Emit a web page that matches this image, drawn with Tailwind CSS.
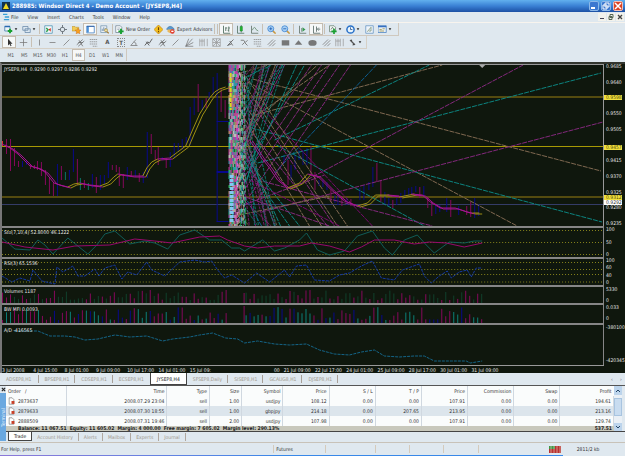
<!DOCTYPE html>
<html lang="en">
<head>
<meta charset="utf-8">
<title>288985: Windsor Direct 4 - Demo Account - [JYSEP8,H4]</title>
<script src="https://cdn.jsdelivr.net/npm/@tailwindcss/browser@4"></script>
</head>
<body class="flex min-h-screen flex-col overflow-x-hidden bg-[#dfe8ef] font-['DejaVu_Sans_Condensed','Open_Sans',sans-serif] text-[5px] leading-[8px] text-[#333]">

<svg class="hidden" aria-hidden="true">
  <defs>
    <symbol id="i-new" viewBox="0 0 12 12"><path d="M1 2h7v6H1z" fill="#eef4f8" stroke="#3c78a8"/><path d="M1 2h7" stroke="#2868b0" stroke-width="2"/><path d="M8 5v6M5 8h6" stroke="#18a030" stroke-width="2.5"/></symbol>
    <symbol id="i-prof" viewBox="0 0 12 12"><path d="M1 2h7v5H1zM4 5h7v5H4z" fill="#dce8f2" stroke="#6888a8"/></symbol>
    <symbol id="i-watch" viewBox="0 0 12 12"><path d="M1 1h10v10H1z" fill="#f4f8fa" stroke="#4890b0"/><path d="M3 4l3 3M3 9l2-2" stroke="#30a050" stroke-width="2"/><path d="M6 6l3-2v5z" fill="#d83020"/></symbol>
    <symbol id="i-data" viewBox="0 0 12 12"><circle cx="6" cy="6" r="3" fill="none" stroke="#707880" stroke-width="1.3"/><path d="M6 0v4M6 8v4M0 6h4M8 6h4" stroke="#707880" stroke-width="1.3"/></symbol>
    <symbol id="i-star" viewBox="0 0 12 12"><path d="M0 2h4l1 1h4v5H0z" fill="#f0cc58" stroke="#b88c28" stroke-width=".7"/><path d="M8 4l1.2 2.5 2.8.3-2 2 .5 3L8 10.500l-2.500 1.300.5-3-2-2 2.800-.3z" fill="#f8a020" stroke="#c06010" stroke-width=".5"/></symbol>
    <symbol id="i-term" viewBox="0 0 12 12"><path d="M1 1.500h10v9H1z" fill="#fff" stroke="#3878c0"/><path d="M2.500 2v8" stroke="#4a90d8" stroke-width="2.500"/><path d="M1 2h10" stroke="#2858a0"/></symbol>
    <symbol id="i-test" viewBox="0 0 12 12"><path d="M1 1h8v9H1z" fill="#e8eef4" stroke="#7898b0"/><path d="M3 8V5M5 8V3M7 8V4" stroke="#6080a0"/><circle cx="8" cy="7" r="2" fill="#f0e0a0" stroke="#a89050"/><path d="M9.500 9l2 2" stroke="#a07830" stroke-width="1.500"/></symbol>
    <symbol id="i-order" viewBox="0 0 12 12"><path d="M1 1h6l2 2v7H1z" fill="#fff" stroke="#708090"/><path d="M3 4h4M3 6h3" stroke="#90a0b0"/><path d="M8 5v7M4.500 8.500h7" stroke="#18a030" stroke-width="2.500"/></symbol>
    <symbol id="i-meta" viewBox="0 0 12 12"><path d="M6 0l6 6-6 6-6-6z" fill="#f4c020" stroke="#c88810"/><path d="M6 3v4M6 8v1.500" stroke="#704000" stroke-width="1.500"/></symbol>
    <symbol id="i-expert" viewBox="0 0 12 12"><path d="M1 5q4-6 9-1l1 2H1z" fill="#5898d0" stroke="#306898" stroke-width=".6"/><path d="M2 6h7v3q-4 3-7 0z" fill="#e8b860"/><circle cx="8.500" cy="8.500" r="3" fill="#e03020"/><path d="M7 7.500h3v2H7z" fill="#fff"/></symbol>
    <symbol id="i-bars" viewBox="0 0 12 12"><path d="M2 1v10h9M5 3v5M5 4h2M9 2v7M7.500 7H9M9 4h1.500" fill="none" stroke="#486858" stroke-width="1.100"/></symbol>
    <symbol id="i-candle" viewBox="0 0 12 12"><path d="M2 1v10h9M7 0v10" fill="none" stroke="#486858"/><path d="M5.500 2h3v6h-3z" fill="#20b830" stroke="#107820" stroke-width=".6"/></symbol>
    <symbol id="i-line" viewBox="0 0 12 12"><path d="M2 1v10h9" fill="none" stroke="#58685c"/><path d="M3 7q3-7 5-1l3 2" fill="none" stroke="#608868"/></symbol>
    <symbol id="i-zin" viewBox="0 0 12 12"><path d="M7.500 7.500l4 4" stroke="#c89840" stroke-width="2"/><circle cx="5" cy="5" r="4" fill="#a8d0f4" stroke="#3880d0"/><path d="M5 3v4M3 5h4" stroke="#1858b0"/></symbol>
    <symbol id="i-zout" viewBox="0 0 12 12"><path d="M7.500 7.500l4 4" stroke="#c89840" stroke-width="2"/><circle cx="5" cy="5" r="4" fill="#a8d0f4" stroke="#3880d0"/><path d="M3 5h4" stroke="#1858b0"/></symbol>
    <symbol id="i-scroll" viewBox="0 0 12 12"><path d="M2 1v10h9M5 4v5" fill="none" stroke="#58685c"/><path d="M6 3l4 3-4 3z" fill="#389850"/></symbol>
    <symbol id="i-shift" viewBox="0 0 12 12"><path d="M2 1v10h9M6 2v7" fill="none" stroke="#485c58"/><path d="M11 5.500H8M9 3.500l-2 2 2 2" fill="none" stroke="#485c58"/></symbol>
    <symbol id="i-ind" viewBox="0 0 12 12"><path d="M2 1h6l2 2v6H2z" fill="#f4f6f4" stroke="#688070"/><path d="M4 6l2-3 2 3" fill="none" stroke="#507060"/><path d="M8 5v7M4.500 8.500h7" stroke="#18a030" stroke-width="2.200"/></symbol>
    <symbol id="i-clock" viewBox="0 0 12 12"><circle cx="6" cy="6" r="4.800" fill="#e8f4fc" stroke="#2870c8" stroke-width="2"/><path d="M6 3v3h2.500" fill="none" stroke="#204880"/></symbol>
    <symbol id="i-tpl" viewBox="0 0 12 12"><path d="M1 1h10v10H1z" fill="#eef4fa" stroke="#6090c0"/><path d="M3 9l5-6v5H5" fill="none" stroke="#789070"/></symbol>
    <symbol id="i-tile" viewBox="0 0 12 12"><path d="M0 1h11v9H0z" fill="#e4eef6" stroke="#4880c0"/><path d="M0 2h11" stroke="#3870c0" stroke-width="2"/><path d="M2 6h3M6 5h3M2 8h6" stroke="#a09040"/></symbol>
    <symbol id="i-cursor" viewBox="0 0 12 12"><path d="M4 1v9l2-2 1.500 3 1.200-.6L7.300 7.500H10z" fill="#333"/></symbol>
    <symbol id="i-cross" viewBox="0 0 12 12"><path d="M6 1v10M1 6h10" stroke="#777"/></symbol>
    <symbol id="i-v" viewBox="0 0 12 12"><path d="M6 2v8" stroke="#777"/></symbol>
    <symbol id="i-h" viewBox="0 0 12 12"><path d="M2 6h8" stroke="#777"/></symbol>
    <symbol id="i-trend" viewBox="0 0 12 12"><path d="M2 10l8-8" stroke="#777"/></symbol>
    <symbol id="i-chan" viewBox="0 0 12 12"><path d="M1 9l8-7M3 11l8-7M4 3l5 8M3 6h6" stroke="#666"/></symbol>
    <symbol id="i-fibo" viewBox="0 0 12 12"><path d="M1 2h10M1 5h10M1 8h10M5 11h6" stroke="#888" stroke-dasharray="2 .6"/></symbol>
    <symbol id="i-ang" viewBox="0 0 12 12"><path d="M1 10l7-8M1 10h9M5 5q4 1 3 5" fill="none" stroke="#777"/></symbol>
    <symbol id="i-zig" viewBox="0 0 12 12"><path d="M1 10l4-5 2 2 4-6M3 5l4 5" fill="none" stroke="#555" stroke-width="1.200"/></symbol>
    <symbol id="i-fan" viewBox="0 0 12 12"><path d="M1 11L10 1M1 11l10-5M1 11h10M1 11L5 1" stroke="#777"/></symbol>
    <symbol id="i-cyc" viewBox="0 0 12 12"><path d="M1 1v10M4 1v10M7 1v10M11 1v10M1 4h6" stroke="#999"/></symbol>
    <symbol id="i-gann" viewBox="0 0 12 12"><path d="M1 1h10v10H1zM1 6h10M6 1v10M1 1l10 10M11 1L1 11" fill="none" stroke="#999"/></symbol>
    <symbol id="i-fork" viewBox="0 0 12 12"><path d="M2 10l8-8M2 10l5-2M5 4l4 6" stroke="#666" stroke-width="1.200"/></symbol>
    <symbol id="i-wave" viewBox="0 0 12 12"><path d="M1 3h4l2 3 3-3M3 9l3-3 4 4" fill="none" stroke="#777" stroke-width="1.200"/></symbol>
    <symbol id="i-para" viewBox="0 0 12 12"><path d="M1 9l7-7M3 11l8-8M7 11l4-4" stroke="#888" stroke-width="1.200"/></symbol>
    <symbol id="i-rect" viewBox="0 0 12 12"><path d="M1 3h10v7H1z" fill="#777"/></symbol>
    <symbol id="i-tri" viewBox="0 0 12 12"><path d="M6 3l5 6H1z" fill="#777"/></symbol>
    <symbol id="i-ell" viewBox="0 0 12 12"><ellipse cx="6" cy="6.500" rx="5.500" ry="3.800" fill="#777"/></symbol>
    <symbol id="i-arr" viewBox="0 0 12 12"><path d="M2 3l4 2-1-3zM6 10l4-1-3-3z" fill="#444"/><path d="M3 3l6 6" stroke="#555" stroke-width="1.500"/></symbol>
    <symbol id="i-dd" viewBox="0 0 6 6"><path d="M1 2h4L3 5z" fill="#222"/></symbol>
    <symbol id="i-doc" viewBox="0 0 12 12"><path d="M2 .5h5l3 3v8H2z" fill="#fff" stroke="#666"/><path d="M6 6h5v5H6z" fill="#c84028"/></symbol>
  </defs>
</svg>

<header class="flex h-3 items-center gap-[2px] bg-linear-to-b from-[#62b0ee] via-[#3a80d4] to-[#1c50a4] px-[2px]">
  <svg class="h-2 w-2" viewBox="0 0 8 8"><path d="M0 0h8v8H0z" fill="#10304c"/><path d="M4 1l3 6H1z" fill="#f0d820"/></svg>
  <h1 class="grow text-[6px] leading-[10px] font-bold whitespace-nowrap text-white">288985: Windsor Direct 4 - Demo Account - [JYSEP8,H4]</h1>
  <div class="flex gap-[2px]">
    <button aria-label="Minimize" class="flex h-[10px] w-[10px] items-end rounded-[2px] border border-[#8cb8e8] bg-[#3c78d0] p-[1px]"><span class="h-[2px] w-1 bg-white"></span></button>
    <button aria-label="Restore" class="h-[10px] w-[10px] rounded-[2px] border border-[#8cb8e8] bg-[#3c78d0]"><svg viewBox="0 0 8 8"><path d="M3 1h4v4H3zM1 3h4v4H1z" fill="none" stroke="#fff"/></svg></button>
    <button aria-label="Close" class="h-[10px] w-[10px] rounded-[2px] border border-[#f0c0b8] bg-[#dc4424]"><svg viewBox="0 0 8 8"><path d="M1 1l6 6M7 1L1 7" stroke="#fff" stroke-width="1.500"/></svg></button>
  </div>
</header>

<nav class="flex h-[11px] items-center border-b border-[#f8f4ee] pl-[3px]">
  <svg class="mr-[1px] h-2 w-[7px]" viewBox="0 0 8 8"><path d="M0 1h5M2 4h5M1 7h6" stroke="#38a0d8" stroke-width="1.500"/></svg>
  <div class="flex grow gap-[9px]">
    <a href="#">File</a><a href="#">View</a><a href="#">Insert</a><a href="#">Charts</a><a href="#">Tools</a><a href="#">Window</a><a href="#">Help</a>
  </div>
  <div class="flex items-center gap-[1px] pr-[1px]">
    <button aria-label="Minimize chart" class="flex h-2 w-2 items-end bg-[#f2f2ec] p-[2px]"><span class="h-[1px] w-1 bg-[#445]"></span></button>
    <button aria-label="Restore chart" class="h-2 w-2 bg-[#f2f2ec]"><svg viewBox="0 0 8 8"><path d="M3 1.500h3v3H3zM2 3.500h3v3H2z" fill="none" stroke="#565"/></svg></button>
    <button aria-label="Close chart" class="h-2 w-2 bg-[#f2f2ec]"><svg viewBox="0 0 8 8"><path d="M2 2l4 4M6 2L2 6" stroke="#444" stroke-width="1.300"/></svg></button>
  </div>
</nav>

<div class="flex h-[13px] w-[399px] items-center border-r border-b border-[#cfc8be] pl-[2px]" id="bar1"></div>
<div class="flex h-[13px] w-[367px] items-center border-r border-b border-[#d6d0c6] pl-[2px]" id="bar2"></div>
<div class="mb-[1px] grid h-3 w-[127px] grid-cols-9 items-center border-r border-[#cfc8be] pl-1 text-center text-[#555]" id="bar3"></div>

<main class="flex grow flex-col border-t-2 border-l-2 border-t-[#33362f] border-l-[#777] bg-[#0f170d] text-[#e4e4e4]" id="chart">
  <section class="flex grow-[162] basis-0">
    <div class="relative grow border-t border-r border-[#999]">
      <svg id="p-main" class="absolute inset-0 h-full w-full" viewBox="2 65 602 161" preserveAspectRatio="none"></svg>
      <p class="absolute top-0 left-[2px] whitespace-nowrap">JYSEP8,H4&nbsp; 0.9290 0.9297 0.9286 0.9292</p>
    </div>
    <div class="relative w-[21px] overflow-hidden">
      <div class="flex h-full flex-col justify-between pl-[2px] leading-[5px]" id="prices"></div>
      <span class="absolute top-[19%] left-0 w-[18px] bg-[#f0e040] pl-[2px] leading-[5px] text-[#554c00]">0.9598</span>
      <span class="absolute top-[50%] left-0 w-[18px] bg-[#f0e040] pl-[2px] leading-[5px] text-[#554c00]">0.9457</span>
      <span class="absolute top-[81%] left-0 w-[18px] bg-[#f0e040] pl-[2px] leading-[5px] text-[#554c00]">0.9312</span>
      <span class="absolute top-[84%] left-0 w-[18px] bg-white pl-[2px] leading-[5px] text-[#333]">0.9292</span>
    </div>
  </section>
  <section class="flex grow-[31] basis-0">
    <div class="relative grow border-t-2 border-r border-[#868686]">
      <svg id="p-sto" class="absolute inset-0 h-full w-full" viewBox="2 228 602 29" preserveAspectRatio="none"></svg>
      <p class="absolute top-0 left-[2px]">Sto(7,10,4) 52.8000 46.1222</p>
    </div>
    <div class="flex w-[21px] flex-col justify-between pl-[2px] leading-[6px]"><span>100</span><span>50</span><span>0</span></div>
  </section>
  <section class="flex grow-[28] basis-0">
    <div class="relative grow border-t-2 border-r border-[#868686]">
      <svg id="p-rsi" class="absolute inset-0 h-full w-full" viewBox="2 259 602 26" preserveAspectRatio="none"></svg>
      <p class="absolute top-0 left-[2px]">RSI(3) 65.1536</p>
    </div>
    <div class="flex w-[21px] flex-col justify-between pl-[2px] leading-[6px]"><span>100</span><span>60</span><span>40</span><span>0</span></div>
  </section>
  <section class="flex grow-[18] basis-0">
    <div class="relative grow border-t-2 border-r border-[#868686]">
      <svg id="p-vol" class="absolute inset-0 h-full w-full" viewBox="2 287 602 16" preserveAspectRatio="none"></svg>
      <p class="absolute top-0 left-[2px]">Volumes 1187</p>
    </div>
    <div class="flex w-[21px] flex-col justify-between pt-[2px] pl-[2px] leading-[5px]"><span>5330</span><span>0</span></div>
  </section>
  <section class="flex grow-[20] basis-0">
    <div class="relative grow border-t-2 border-r border-[#868686]">
      <svg id="p-mfi" class="absolute inset-0 h-full w-full" viewBox="2 305 602 18" preserveAspectRatio="none"></svg>
      <p class="absolute top-0 left-[2px]">BW MFI 0.0093</p>
    </div>
    <div class="flex w-[21px] flex-col justify-between py-[2px] pl-[2px] leading-[5px]"><span>0.033</span><span>0</span></div>
  </section>
  <section class="flex grow-[42] basis-0">
    <div class="relative grow border-t-2 border-r border-[#868686]">
      <svg id="p-ad" class="absolute inset-0 h-full w-full" viewBox="2 325 602 40" preserveAspectRatio="none"></svg>
      <p class="absolute top-[1px] left-[2px]">A/D -416565</p>
    </div>
    <div class="flex w-[21px] flex-col justify-between py-[2px] pl-[2px] leading-[5px]"><span>-380100</span><span>-420345</span></div>
  </section>
  <div class="mr-[21px] flex h-2 border-t border-[#999] whitespace-nowrap" id="dates"></div>
</main>

<nav class="flex h-[13px] items-center gap-[1px] border-b border-[#555] text-[#a0988e]" id="tabs">
  <a href="#" class="border-r border-[#a8a098] px-[6px]">ADSEP8,H1</a>
  <a href="#" class="border-r border-[#a8a098] px-[5px]">BPSEP8,H1</a>
  <a href="#" class="border-r border-[#a8a098] px-[5px]">CDSEP8,H1</a>
  <a href="#" class="px-[5px]">ECSEP8,H1</a>
  <a href="#" class="flex h-3 items-center border border-t-0 border-[#444] bg-white px-[6px] text-[#222]">JYSEP8,H4</a>
  <a href="#" class="border-r border-[#a8a098] px-[5px]">SFSEP8,Daily</a>
  <a href="#" class="border-r border-[#a8a098] px-[5px]">SISEP8,H1</a>
  <a href="#" class="border-r border-[#a8a098] px-[5px]">GCAUG8,H1</a>
  <a href="#" class="border-r border-[#a8a098] px-[5px]">DJSEP8,H1</a>
  <span class="grow"></span>
  <button aria-label="Scroll tabs left" class="w-2 text-[#667]">‹</button>
  <button aria-label="Scroll tabs right" class="w-2 text-[#667]">›</button>
</nav>

<section class="flex h-[55px]">
  <div class="flex w-[7px] flex-col items-center">
    <button aria-label="Close terminal" class="h-[7px] w-[5px]"><svg viewBox="0 0 6 6"><path d="M1 1l4 4M5 1L1 5" stroke="#222" stroke-width="1.300"/></svg></button>
    <div class="flex w-[6px] grow items-center justify-center bg-[#6aa8e0] leading-[6px] text-[#e8f2fc]"><span class="[writing-mode:vertical-rl] rotate-180">Terminal</span></div>
  </div>
  <div class="flex grow flex-col">
    <div class="flex h-[46px] overflow-hidden border-b border-[#444]">
      <div class="grow bg-[#fafcfc]">
        <table class="w-full table-fixed border-collapse text-right leading-[8px]">
          <thead><tr class="h-[10px]">
            <th class="w-[10%] border-r border-[#d0d8e0] pl-[2px] text-left font-normal">Order &nbsp; ∕</th>
            <th class="w-[16.5%] border-r border-[#d0d8e0] pr-[2px] font-normal">Time</th>
            <th class="w-[7%] border-r border-[#d0d8e0] pr-[2px] font-normal">Type</th>
            <th class="w-[5.300%] border-r border-[#d0d8e0] pr-[2px] font-normal">Size</th>
            <th class="w-[6.800%] border-r border-[#d0d8e0] pr-[2px] font-normal">Symbol</th>
            <th class="w-[7.600%] border-r border-[#d0d8e0] pr-[2px] font-normal">Price</th>
            <th class="w-[7.600%] border-r border-[#d0d8e0] pr-[2px] font-normal">S / L</th>
            <th class="w-[7.600%] border-r border-[#d0d8e0] pr-[2px] font-normal">T / P</th>
            <th class="w-[7.600%] border-r border-[#d0d8e0] pr-[2px] font-normal">Price</th>
            <th class="w-[7.600%] border-r border-[#d0d8e0] pr-[2px] font-normal">Commission</th>
            <th class="w-[7.600%] border-r border-[#d0d8e0] pr-[2px] font-normal">Swap</th>
            <th class="pr-[2px] font-normal">Profit</th>
          </tr></thead>
          <tbody id="orders"></tbody>
        </table>
        <div class="flex justify-between bg-[#c8c8bc] pr-[2px] pl-3 leading-[5px] font-bold text-[#222]"><span>Balance: 11 067.51&nbsp; Equity: 11 605.02&nbsp; Margin: 4 000.00&nbsp; Free margin: 7 605.02&nbsp; Margin level: 290.13%</span><span>537.51</span></div>
      </div>
      <div class="mr-[3px] flex w-2 shrink-0 flex-col justify-between bg-[#eaf0f6]">
        <button aria-label="Scroll up" class="h-[9px] bg-[#bcd4ec]"><svg viewBox="0 0 8 8"><path d="M2 5l2-2 2 2" fill="none" stroke="#246"/></svg></button>
        <div class="mb-1 h-[18px] border border-[#a8c4e0] bg-[#c8dcf0]"></div>
        <button aria-label="Scroll down" class="h-2 bg-[#bcd4ec]"><svg viewBox="0 0 8 8"><path d="M2 3l2 2 2-2" fill="none" stroke="#246"/></svg></button>
      </div>
    </div>
    <nav class="flex h-[9px] items-center pl-[2px] text-[#a0988e]">
      <a href="#" class="border border-t-0 border-[#444] bg-white px-[5px] text-[#222]">Trade</a>
      <a href="#" class="border-r border-[#b0a8a0] px-[5px]">Account History</a>
      <a href="#" class="border-r border-[#b0a8a0] px-[5px]">Alerts</a>
      <a href="#" class="border-r border-[#b0a8a0] px-[5px]">Mailbox</a>
      <a href="#" class="border-r border-[#b0a8a0] px-[5px]">Experts</a>
      <a href="#" class="border-r border-[#b0a8a0] px-[5px]">Journal</a>
    </nav>
  </div>
</section>

<footer class="mt-[1px] border-t border-[#c8c2b8]">
  <div class="flex h-3 items-center">
    <span class="w-[43.700%] pl-[1px]">For Help, press F1</span>
    <span class="w-[8.500%] border-x border-[#d4cabc] pl-[2px]">Futures</span>
    <span class="h-2 w-[7.900%] border-r border-[#d4cabc]"></span>
    <span class="h-2 w-[5.500%] border-r border-[#d4cabc]"></span>
    <span class="h-2 w-[5.500%] border-r border-[#d4cabc]"></span>
    <span class="h-2 w-[5.500%] border-r border-[#d4cabc]"></span>
    <span class="flex grow items-center gap-4 pl-[70px]">
      <svg class="h-[7px] w-3" viewBox="0 0 12 7"><path d="M0 0h12v7H0z" fill="#b83030"/><path d="M0 0h6v3H0z" fill="#409848"/><path d="M2 0v7M5 0v7M8 0v7M11 0v7" stroke="#e8d8c8" stroke-width=".6"/></svg>
      <span>2811/2 kb</span>
    </span>
  </div>
  <div class="mr-[10%] h-[1px] bg-linear-to-r from-[#8c78d8] via-[#3888e8] to-[#3888e8]"></div>
</footer>

<script>
// Toolbars: [icon, label, options]
const ic = id => `<svg class="h-[9px] w-[9px]"><use href="#${id}"/></svg>`;
const dd = '<svg class="h-1 w-1"><use href="#i-dd"/></svg>';
const sep = '<span class="mx-[1px] h-[10px] w-[1px] bg-[#c8c0b4]"></span>';
const btn = (id, label) => `<button aria-label="${label}" class="flex h-3 w-[14px] items-center justify-center">${ic(id)}</button>`;
const on = (id, label) => `<button aria-label="${label}" class="flex h-3 w-[14px] items-center justify-center border border-[#c4bcb0] bg-[#f6f8f8]">${ic(id)}</button>`;
const drop = (id, label) => `<button aria-label="${label}" class="flex h-3 w-[18px] items-center justify-center gap-[1px]">${ic(id)}${dd}</button>`;
const txt = (id, label) => `<button class="flex h-3 items-center gap-[2px] px-[1px] whitespace-nowrap">${ic(id)}${label}</button>`;
document.getElementById('bar1').innerHTML =
  drop('i-new', 'New chart') + drop('i-prof', 'Profiles') + sep +
  btn('i-watch', 'Market Watch') + btn('i-data', 'Data Window') + btn('i-star', 'Navigator') + on('i-term', 'Terminal') + btn('i-test', 'Strategy Tester') + sep +
  txt('i-order', 'New Order') + btn('i-meta', 'MetaEditor') + txt('i-expert', 'Expert Advisors') + sep + sep +
  on('i-bars', 'Bar chart') + btn('i-candle', 'Candlesticks') + btn('i-line', 'Line chart') + sep +
  btn('i-zin', 'Zoom in') + btn('i-zout', 'Zoom out') + sep +
  btn('i-scroll', 'Auto scroll') + on('i-shift', 'Chart shift') + sep +
  drop('i-ind', 'Indicators') + drop('i-clock', 'Periods') + btn('i-tpl', 'Templates') + drop('i-tile', 'Tile windows');

const tools = ['v Vertical', 'h Horizontal', 'trend Trendline', 'chan Channel', 'fibo Fibonacci', 'A Text', 'T Label', 'ang Angle', 'zig Zigzag', 'chan Regression', 'trend Ray', 'fan Fan', 'cyc Cycles', 'gann Gann', 'fork Pitchfork', 'wave Wave', 'fibo Expansion', 'para Parallel', 'rect Rectangle', 'tri Triangle', 'ell Ellipse', 'para Lines', 'cyc Timezones'];
document.getElementById('bar2').innerHTML =
  on('i-cursor', 'Cursor') + btn('i-cross', 'Crosshair') + sep +
  '<div class="flex w-[313px] justify-between">' + tools.map(t => {
    const [k, label] = t.split(' ');
    const face = k === 'A' || k === 'T'
      ? `<span class="${k === 'T' ? 'border border-dotted border-[#888] px-[1px] leading-[7px]' : ''} text-[6px] font-bold text-[#555]">${k}</span>` : ic('i-' + k);
    return `<button aria-label="${label}" class="flex h-3 w-3 items-center justify-center">${face}</button>`;
  }).join('') + '</div>' + drop('i-arr', 'Arrows');
document.getElementById('bar3').innerHTML = ['M1', 'M5', 'M15', 'M30', 'H1', 'H4', 'D1', 'W1', 'MN'].map(t =>
  `<button class="${t === 'H4' ? 'h-3 border border-[#c4bcb0] bg-[#f6f8f8]' : 'h-3'}">${t}</button>`).join('');

// Blank slots lie under the level tags
document.getElementById('prices').innerHTML = ['0.9685', '0.9640', '', '0.9550', '0.9505', '', '0.9415', '0.9370', '0.9325', '0.9280', '0.9235'].map(p => `<span class="h-[5px]">${p}</span>`).join('');
document.getElementById('dates').innerHTML = ['3 Jul 2008', '4 Jul 15:00', '8 Jul 01:00', '9 Jul 09:00', '10 Jul 17:00', '14 Jul 01:00', '15 Jul 09:', '', '00', '21 Jul 09:00', '22 Jul 17:00', '24 Jul 01:00', '25 Jul 09:00', '28 Jul 17:00', '30 Jul 01:00', '31 Jul 09:00'].map(d =>
  `<span class="${d === '00' ? 'w-[5.200%] pr-1 text-right' : 'w-[5.200%]'}">${d}</span>`).join('');

document.getElementById('orders').innerHTML = [
  ['2873637', '2008.07.29 23:04', 'sell', '1.00', 'usdjpy', '108.12', '0.00', '0.00', '107.91', '0.00', '0.00', '194.61'],
  ['2879633', '2008.07.30 18:55', 'sell', '1.00', 'gbpjpy', '214.18', '0.00', '207.65', '213.95', '0.00', '0.00', '213.16'],
  ['2888509', '2008.07.31 19:46', 'sell', '2.00', 'usdjpy', '107.98', '0.00', '0.00', '107.91', '0.00', '0.00', '129.74']
].map((r, n) => `<tr class="${n === 1 ? 'h-[10px] bg-[#dce5ec]' : 'h-[10px]'}">` + r.map((c, i) => i === 0
  ? `<td class="border-r border-[#d0d8e0] pl-[2px]"><span class="flex items-center gap-[3px]"><svg class="h-2 w-[7px]"><use href="#i-doc"/></svg>${c}</span></td>`
  : `<td class="border-r border-[#d0d8e0] pr-[2px]">${c}</td>`).join('') + '</tr>').join('');

// Chart drawing
let seed = 7;
const rnd = () => (seed = (seed * 1103515245 + 12345) % 2147483648) / 2147483648;
const put = (id, html) => { document.getElementById(id).innerHTML = html; };
const ln = (x1, y1, x2, y2, c, w = 1, dash = '') => `<line x1="${x1}" y1="${y1}" x2="${x2}" y2="${y2}" stroke="${c}" stroke-width="${w}" stroke-dasharray="${dash}"/>`;
const poly = (pts, c, dash = '', w = 1) => `<polyline points="${pts}" fill="none" stroke="${c}" stroke-width="${w}" stroke-dasharray="${dash}"/>`;
const P = '#86085c', B = '#08088c', T = '#0c7468', TAN = '#806850', CY = '#0c8480', MG = '#84287c';

let m = ln(2, 97, 604, 97, '#6c5e10', 1.5) + ln(2, 146.5, 604, 146.5, '#a89a04') + ln(2, 197, 604, 197, '#6c5e10', 1.5) + ln(2, 204.5, 604, 204.5, '#343c68');
const bars = { p: P, b: B, t: T, r: '#e03030' };
m += `2 141 146 r;6 139 154 p;10 139 171 p;14 148 166 p;18 161 167 p;22 161 167 b;26 160 165 b;30 164 169 p;34 165 169 p;37 161 170 p;41 162 176 p;45 170 185 p;49 178 194 p;53 183 196 p;57 164 196 b;61 166 180 p;65 172 180 t;69 170 180 b;73 149 172 b;77 159 185 p;80 178 190 t;84 180 188 p;88 183 190 t;92 174 188 b;96 177 193 p;100 175 190 b;104 175 184 b;108 162 178 b;112 165 170 p;116 165 172 p;119 167 186 p;123 174 188 p;127 167 180 b;131 171 176 p;135 170 177 b;139 173 182 p;143 172 183 b;147 132 178 b;151 134 154 p;155 150 160 p;158 147 165 p;162 157 160 b;166 158 168 p;170 152 167 b;174 143 158 b;178 143 152 b;182 139 150 b;186 137 145 b;190 107 145 b;194 98 115 b;198 84 112 p;202 100 110 b;206 98 108 p;209 92 100 b;213 77 95 b;217 73 222 b;221 88 112 p;225 100 118 p;284 155 163 b;288 160 185 p;291 165 180 b;295 155 170 b;299 150 160 b;303 150 165 b;307 148 165 b;311 146 175 p;315 172 190 p;319 180 186 b;323 180 187 b;327 182 190 b;331 190 202 p;335 195 203 b;338 195 205 b;342 196 206 p;347 198 205 b;351 199 206 p;360 188 200 b;364 185 200 b;369 182 190 b;373 167 187 b;377 163 182 p;381 180 202 p;385 192 204 b;389 198 206 b;393 200 208 p;397 198 205 b;401 193 203 b;405 190 198 b;409 188 196 b;412 187 195 b;416 186 192 b;420 187 198 p;424 186 196 b;428 197 208 p;432 202 216 p;436 206 214 b;440 205 212 b;447 198 212 b;451 200 217 p;459 206 215 b;467 206 215 p;471 202 217 p;475 198 218 b;479 204 216 b`
  .split(';').map(s => { const [x, a, b, c] = s.split(' '); return ln(+x + .5, a, +x + .5, b, bars[c]); }).join('');
m += ln(217, 121.5, 229, 121.5, B) + ln(217, 172, 229, 172, B, 2) + ln(217, 221.5, 229, 221.5, B);

// Long rays
m += [[253, 79, 602, 171, TAN], [248, 82, 518, 226, TAN], [255, 115, 443, 65, TAN], [275, 140, 430, 65, CY], [258, 163, 602, 73, CY],
  [252, 128, 603, 222, CY], [277, 145, 425, 226, CY], [262, 212, 604, 122, MG], [292, 188, 524, 65, MG], [258, 180, 433, 226, MG], [275, 173, 377, 65, '#0c5c90'],
  [258, 200, 351, 65, MG], [250, 196, 340, 65, MG], [246, 188, 330, 65, MG], [246, 175, 322, 65, MG], [244, 165, 312, 65, MG], [240, 160, 285, 65, MG], [238, 150, 278, 65, MG],
  [250, 120, 330, 65, TAN], [246, 130, 318, 65, TAN], [240, 180, 305, 65, CY], [240, 195, 297, 65, CY], [242, 150, 283, 65, CY], [238, 170, 270, 65, CY], [236, 190, 265, 65, CY],
  [255, 100, 373, 226, '#78086c'], [244, 90, 335, 226, MG], [242, 120, 328, 226, MG], [246, 76, 348, 226, TAN], [242, 80, 338, 226, TAN], [240, 96, 322, 226, TAN], [240, 110, 310, 226, TAN],
  [244, 160, 290, 226, CY], [242, 140, 281, 226, CY], [240, 120, 275, 226, CY], [240, 150, 300, 226, CY], [236, 180, 262, 226, '#0c5c90'], [250, 180, 340, 226, '#78086c'],
  [240, 195, 330, 226, MG], [244, 205, 325, 175, MG], [240, 215, 330, 196, TAN]].map(l => ln(...l, 1, '5 1')).join('');
for (let i = 0; i < 34; i++) {
  const c = [CY, MG, TAN, '#0c8480', '#8c1880'][i % 5], x = 236 + rnd() * 12, y = 70 + rnd() * 140, up = rnd() > .5;
  m += ln(x, y, x + 6 + rnd() * 34, up ? 65 : 226, c, .8, '3 1');
}
// Dense column where every ray originates
const hot = ['#30e0c0', '#e040c0', '#e8b890', '#38d870', '#f0f0f0', '#d850d8', '#40a8e8', '#f07090'];
for (let x = 229.5; x < 238; x += 1) for (let y = 65; y < 226; y += 3) if (rnd() > .12) m += ln(x, y, x, Math.min(226, y + 3), hot[Math.floor(rnd() * 8)]);
for (let i = 0; i < 20; i++) { const x = 237 + rnd() * 10; m += ln(x, 65, x + rnd() * 6 - 3, 226, hot[i % 8], .6, (3 + i % 4) + ' ' + (2 + i % 5)); }
m += ln(231, 73, 231, 110, '#d8d820', 2, '4 1') + ln(232, 175, 232, 222, '#80c8f0', 4, '3 1');

// Moving averages
const Y = '#a09014', M = '#a41490';
const ma = [['2,144 10,148 18,154 24,160 30,166 38,168 45,172 50,178 54,183 60,185 68,187', M], ['68,187 74,184 80,183', Y], ['80,183 90,185 100,186', M], ['100,186 108,183 114,177 118,174', Y],
  ['118,174 132,176 143,176', M], ['143,176 147,168 152,162 158,159', Y], ['158,159 170,158', M], ['170,158 178,152 186,146 192,132 200,114 210,98 215,92 220,89 226,87', Y],
  ['250,140 262,158 270,168 278,180 288,188', M], ['288,188 300,183 308,174', Y], ['308,174 318,176 332,190 345,201 358,206', M], ['358,206 368,203 376,195 390,195', Y], ['388,195 400,196', M], ['400,197 415,194', Y],
  ['412,194 423,195 431,202 441,208 456,208 468,212 473,213', M], ['473,213 480,213', Y]];
m += ma.map(([p, c]) => poly(p, c) + `<g transform="translate(3 1)">${poly(p, c)}</g>`).join('');
m += '<path d="M480 65h6l-3 3z" fill="#aaa"/>';
put('p-main', m);

const level = y => ln(2, y, 604, y, '#88841c', 1, '1 2');
put('p-sto', [230.5, 242.5, 254.5].map(level).join('') +
  poly('2,238 15,249 30,250 38,240 45,245 53,254 68,238 88,254 97,245 105,234 115,231 130,244 145,241 155,243 168,249 180,235 195,230 210,240 222,240 232,248 240,248 245,251 263,240 275,251 285,248 300,240 307,233 318,250 330,255 345,251 358,236 373,231 385,248 393,255 405,240 418,235 427,245 435,253 450,242 465,243 475,241 483,241', '#105c58') +
  poly('2,242 25,247 53,250 75,246 110,245 135,239 155,241 172,243 200,237 220,236 228,240 245,246 258,248 275,246 300,246 312,243 330,246 350,252 362,247 375,240 395,240 415,244 430,242 447,243 465,247 483,243', '#98086c'));
put('p-rsi', [262.5, 269.5, 274.5, 282].map(level).join('') +
  poly('2,276 12,282 20,278 30,281 33,270 42,281 55,284 57,267 63,272 73,266 78,276 85,276 95,269 99,276 105,268 115,265 122,279 128,272 137,275 147,262 152,270 165,276 180,262 195,260 205,262 212,261 218,270 225,278 232,275 245,283 257,273 270,282 285,270 290,277 297,266 307,265 315,280 330,281 340,275 350,273 362,266 373,261 382,278 395,280 403,270 420,264 425,276 432,283 440,276 448,271 452,278 460,272 468,270 472,277 477,268 483,268', '#1438a0', '3 1'));
const hist = (base, max, cols) => {
  let s = '';
  for (let x = 2.5; x < 484; x += 4) if (x < 228 || x > 244) s += ln(x, base, x, base - 3 - Math.pow(rnd(), 1.500) * max, cols[Math.floor(rnd() * cols.length)]);
  return s;
};
put('p-vol', hist(303, 10, ['#10402c', P, '#10402c', P]) + ln(244.500, 303, 244.500, 293, P));
put('p-mfi', hist(323, 13, [B, P, '#0c8078', P]) + ln(244.500, 323, 244.500, 306, P));
put('p-ad', poly('14,331 38,331 50,336 65,336 75,337 85,340 98,339 115,335 130,337 147,336 163,341 173,339 190,337 200,335 213,333 226,338 238,339 245,343 258,341 275,344 290,345 307,344 320,350 335,354 350,355 362,352 375,350 385,356 400,357 415,356 425,356 435,361 452,361 467,361 471,363 483,361', '#146488', '3 1'));
</script>
</body>
</html>
